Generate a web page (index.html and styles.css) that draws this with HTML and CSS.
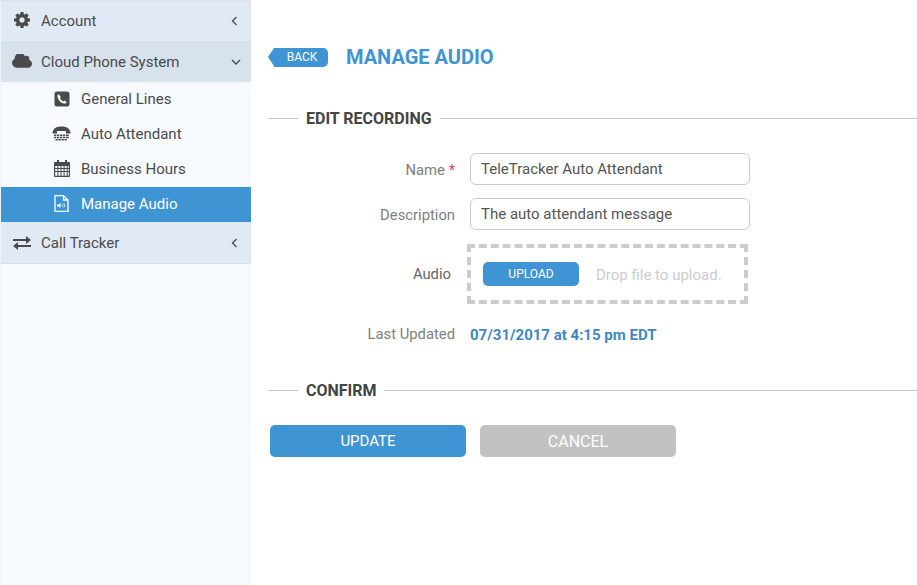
FILE: index.html
```html
<!DOCTYPE html>
<html lang="en">
<head>
<meta charset="utf-8">
<title>Manage Audio</title>
<link rel="stylesheet" href="styles.css">
</head>
<body>
<div class="app">
  <nav class="sidebar">
    <div class="nav-top">
      <span class="ico-box up1"><svg class="ico" width="16" height="16" viewBox="0 0 1536 1536"><path d="M1024 768q0-106-75-181t-181-75-181 75-75 181 75 181 181 75 181-75 75-181zm512-109v222q0 12-8 23t-20 13l-185 28q-19 54-39 91 35 50 107 138 10 12 10 25t-9 23q-27 37-99 108t-94 71q-12 0-26-9l-138-108q-44 23-91 38-16 136-29 186-7 28-36 28h-222q-14 0-24.500-8.500t-11.500-21.500l-28-184q-49-16-90-37l-141 107q-10 9-25 9-14 0-25-11-126-114-165-168-7-10-7-23 0-12 8-23 15-21 51-66.500t54-70.500q-27-50-41-99l-183-27q-13-2-21-12.500t-8-23.500v-222q0-12 8-23t19-13l186-28q14-46 39-92-40-57-107-138-10-12-10-24 0-10 9-23 26-36 98.500-107.500t94.500-71.500q13 0 26 10l138 107q44-23 91-38 16-136 29-186 7-28 36-28h222q14 0 24.500 8.500t11.500 21.500l28 184q49 16 90 37l142-107q9-9 24-9 13 0 25 10 129 119 165 170 7 8 7 22 0 12-8 23-15 21-51 66.500t-54 70.500q26 50 41 98l183 28q13 2 21 12.500t8 23.500z"/></svg></span>
      <span class="nav-label">Account</span>
      <svg class="chev" width="7" height="10" viewBox="0 0 7 10"><path d="M5.500 1 1.500 5 5.500 9"/></svg>
    </div>
    <div class="nav-top open">
      <span class="ico-box up2"><svg class="ico" width="20" height="14" viewBox="0 256 1920 1280"><path d="M1920 1152q0 159-112.500 271.500t-271.500 112.500h-1088q-185 0-316.500-131.500t-131.500-316.500q0-132 71-241.500t187-163.500q-2-28-2-43 0-212 150-362t362-150q158 0 286.500 88t187.500 230q70-62 166-62 106 0 181 75t75 181q0 75-41 138 129 30 213 134.500t84 239.500z"/></svg></span>
      <span class="nav-label">Cloud Phone System</span>
      <svg class="chev" width="10" height="6" viewBox="0 0 10 6"><path d="M1 1 5 5 9 1"/></svg>
    </div>
    <div class="nav-sub">
      <span class="ico-box"><svg class="ico" width="16" height="16" viewBox="0 0 16 16"><rect width="15" height="15" x=".5" y=".5" rx="2.500"/><path fill="#f6faff" d="M4.800 3.200c-.6.200-1.300.8-1.300 1.700 0 3.800 3.800 7.600 7.500 7.600.9 0 1.600-.7 1.800-1.300l-2.300-1.700-1.200 1c-1.400-.6-2.800-2-3.400-3.400l1-1.200z"/></svg></span>
      <span class="nav-label">General Lines</span>
    </div>
    <div class="nav-sub">
      <span class="ico-box"><svg class="ico" width="19" height="15" viewBox="0 0 19 15"><path d="M.5 6C2 1.500 5.500.5 9.500.5s7.500 1 9 5.500v1.500H14V5H5v2.500H.5z"/><path d="M2 8.500h2.300V10H2zM5 8.500h2.300V10H5zM8 8.500h2.300V10H8zM11 8.500h2.300V10H11zM14 8.500h2.700V10H14zM2 10.800h2.300v1.500H2zM5 10.800h2.300v1.500H5zM8 10.800h2.300v1.500H8zM11 10.800h2.300v1.500H11zM14 10.800h2.700v1.500H14zM3.500 13h2.300v1.500H3.500zM6.500 13h2.300v1.500H6.500zM9.500 13h2.300v1.500H9.500zM12.500 13h2.300v1.500h-2.300z"/></svg></span>
      <span class="nav-label">Auto Attendant</span>
    </div>
    <div class="nav-sub">
      <span class="ico-box"><svg class="ico" width="16" height="17" viewBox="0 0 16 17"><path fill-rule="evenodd" d="M3 0h2v2h6V0h2v2h2a1 1 0 0 1 1 1v13a1 1 0 0 1-1 1H1a1 1 0 0 1-1-1V3a1 1 0 0 1 1-1h2zM1.200 6v2h2.200V6zm3.200 0v2h2.100V6zm3.100 0v2h2.100V6zm3.100 0v2h2.100V6zm3.100 0v2h1.100V6zM1.200 9v2h2.200V9zm3.200 0v2h2.100V9zm3.100 0v2h2.100V9zm3.100 0v2h2.100V9zm3.100 0v2h1.100V9zM1.200 12v3.800h2.200V12zm3.200 0v3.800h2.100V12zm3.100 0v3.800h2.100V12zm3.100 0v3.800h2.100V12zm3.100 0v3.800h1.100V12z"/></svg></span>
      <span class="nav-label">Business Hours</span>
    </div>
    <div class="nav-sub active">
      <span class="ico-box"><svg class="ico" width="15" height="17" viewBox="0 0 15 17"><path fill="none" stroke="currentColor" stroke-width="1.300" d="M1 .7h8.500L14 5v11.300H1zM9.500.7V5H14"/><path d="M3 9.500h1.500L6.500 8v5l-2-1.500H3z"/><path fill="none" stroke="currentColor" d="M8 9.500q.8 1 0 2M9.800 8.500q1.600 2 0 4"/></svg></span>
      <span class="nav-label">Manage Audio</span>
    </div>
    <div class="nav-top last">
      <span class="ico-box"><svg class="ico" width="18" height="14" viewBox="0 0 18 14"><path d="M0 3h13V0l5 4-5 4V5H0zM18 9H5V6l-5 4 5 4v-3h13z"/></svg></span>
      <span class="nav-label">Call Tracker</span>
      <svg class="chev" width="7" height="10" viewBox="0 0 7 10"><path d="M5.500 1 1.500 5 5.500 9"/></svg>
    </div>
  </nav>
  <main class="main">
    <header class="page-head">
      <a class="back">BACK</a>
      <h1 class="title">MANAGE AUDIO</h1>
    </header>
    <h2 class="section"><span>EDIT RECORDING</span></h2>
    <div class="form">
      <div class="row">
        <label class="lbl lbl-low">Name <b class="req">*</b></label>
        <input class="field" type="text" value="TeleTracker Auto Attendant">
      </div>
      <div class="row">
        <label class="lbl lbl-low">Description</label>
        <input class="field" type="text" value="The auto attendant message">
      </div>
      <div class="row audio">
        <label class="lbl lbl-audio">Audio</label>
        <div class="drop">
          <button class="upload">UPLOAD</button>
          <span class="hint">Drop file to upload.</span>
        </div>
      </div>
      <div class="row updated">
        <label class="lbl">Last Updated</label>
        <span class="stamp">07/31/2017 at 4:15 pm EDT</span>
      </div>
    </div>
    <h2 class="section confirm"><span>CONFIRM</span></h2>
    <div class="actions">
      <button class="btn primary">UPDATE</button>
      <button class="btn muted">CANCEL</button>
    </div>
  </main>
</div>
</body>
</html>
```
FILE: styles.css
```css
* { box-sizing: border-box; }
html, body { margin: 0; height: 100%; }
body { font-family: Roboto, "Liberation Sans", sans-serif; background: #fff; color: #444; overflow: hidden; }
.app { display: flex; height: 585px; }

.sidebar { width: 251px; flex: none; background: #f6faff; border-left: 1px solid #f0f4f8; border-top: 1px solid #dfe3e8; }
.nav-top { display: flex; align-items: center; height: 40px; background: #e1eaf4; padding-left: 11px; padding-right: 13px; font-size: 15px; color: #4a4a4a; }
.nav-top.open { height: 41px; padding-top: 1px; padding-right: 10px; background: #d8e2ec; }
.nav-top.last { height: 42px; padding-top: 1px; border-bottom: 1px solid #d8e2ec; }
.nav-sub { display: flex; align-items: center; height: 35px; padding-left: 51px; padding-bottom: 2px; font-size: 15px; color: #4a4a4a; }
.nav-sub.active { background: #3f94d4; color: #fff; }
.ico-box { display: flex; justify-content: center; align-items: center; width: 19px; margin-right: 10px; flex: none; }
.up1 { margin-top: -2px; }
.up2 { margin-top: -3px; }
.ico { fill: currentColor; flex: none; }
.nav-label { flex: 1; }
.chev { fill: none; stroke: #4a4a4a; stroke-width: 1.400; flex: none; }

.main { flex: 1; min-width: 0; padding-left: 17px; padding-top: 46px; }
.page-head { display: flex; align-items: center; height: 22px; }
.back { position: relative; display: block; width: 54px; height: 19px; margin-left: 6px; border-radius: 0 5px 5px 0; background: #3f94d4; color: #fff; font-size: 12px; line-height: 19px; text-align: center; padding-left: 2px; }
.back::before { content: ""; position: absolute; left: -6px; top: 0; border-style: solid; border-width: 9.500px 6px 9.500px 0; border-color: transparent #3f94d4 transparent transparent; }
.title { margin: 0 0 0 18px; font-size: 20px; font-weight: 700; color: #3f94d4; }

.section { display: flex; align-items: center; margin: 40px 0 0; font-size: 16px; font-weight: 700; color: #444; height: 20px; }
.section::before { content: ""; width: 30px; height: 1px; background: #c8c8c8; }
.section::after { content: ""; flex: 1; height: 1px; background: #c8c8c8; }
.section span { padding: 0 8px; }
.section.confirm { margin-top: 35px; }
.section.confirm span { padding-right: 7px; }

.form { margin-top: 25px; }
.row { display: flex; align-items: center; height: 32px; margin-bottom: 13px; }
.lbl { width: 202px; flex: none; text-align: right; font-size: 14.800px; color: #808080; padding-right: 15px; }
.lbl-low { padding-top: 2px; }
.req { color: #e8434f; font-weight: 400; }
.field { width: 280px; height: 32px; border: 1px solid #ccc; border-radius: 6px; padding: 0 10px; font: 15px Roboto, sans-serif; color: #555; outline: none; }
.audio { height: 60px; margin-bottom: 19px; margin-top: 14px; }
.lbl-audio { color: #666; padding-right: 19px; }
.drop { display: flex; align-items: center; width: 281px; height: 60px; margin-left: -3px; padding-left: 12px; border: 4px dashed #ccc; }
.upload { width: 96px; height: 24px; border: 0; border-radius: 5px; background: #3f94d4; color: #fff; font: 12px Roboto, sans-serif; padding: 0; }
.hint { margin-left: 17px; padding-top: 2px; font-size: 15px; color: #ccc; }
.updated { height: 22px; margin-bottom: 0; }
.stamp { padding-top: 2px; font-size: 15px; font-weight: 700; color: #3f88c5; }

.actions { display: flex; gap: 14px; margin-top: 25px; padding-left: 2px; }
.btn { width: 196px; height: 32px; border: 0; border-radius: 5px; color: #fff; padding: 0; }
.primary { background: #3f94d4; font: 15px Roboto, sans-serif; }
.muted { background: #c2c2c2; font: 16px Roboto, sans-serif; }
```
